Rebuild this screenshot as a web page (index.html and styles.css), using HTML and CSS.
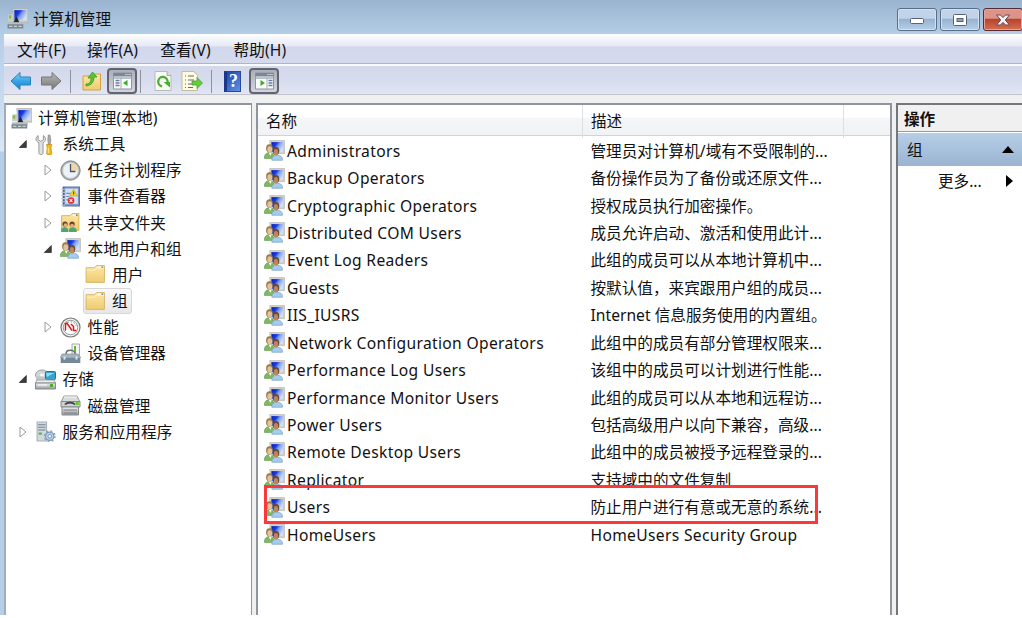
FILE: index.html
```html
<!DOCTYPE html>
<html lang="zh-CN">
<head>
<meta charset="utf-8">
<title>计算机管理</title>
<link rel="stylesheet" href="styles.css">
</head>
<body>
<svg class="sprite" width="0" height="0" aria-hidden="true">
  <defs>
    <linearGradient id="screen" x1="0" y1="0" x2="1" y2=".6"><stop offset="0" stop-color="#0a1cb4"/><stop offset=".4" stop-color="#1b3ee0"/><stop offset=".6" stop-color="#7d9cf2"/><stop offset="1" stop-color="#cfe1ff"/></linearGradient>
    <linearGradient id="gold" x1="0" y1="0" x2="0" y2="1"><stop offset="0" stop-color="#fbe7a6"/><stop offset="1" stop-color="#f0cb72"/></linearGradient>
    <linearGradient id="blueArrow" x1="0" y1="0" x2="0" y2="1"><stop offset="0" stop-color="#8cd5f8"/><stop offset=".5" stop-color="#36a5e6"/><stop offset="1" stop-color="#1a7ec9"/></linearGradient>
    <linearGradient id="greyArrow" x1="0" y1="0" x2="0" y2="1"><stop offset="0" stop-color="#b8b8b8"/><stop offset="1" stop-color="#777"/></linearGradient>
    <linearGradient id="metal" x1="0" y1="0" x2="0" y2="1"><stop offset="0" stop-color="#eef0f1"/><stop offset="1" stop-color="#979ca1"/></linearGradient>
    <symbol id="computer" viewBox="0 0 20 20">
      <path d="M5.500 .5H20v13H6.500z" fill="#d5d2ca" stroke="#aaa8a2" stroke-width=".6"/><path d="M7 2h11.500v9.500H7z" fill="url(#screen)"/>
      <path d="M1 6.500l5-.8v7H1z" fill="#c9ccc5"/><rect x="2" y="7" width="2" height="3" fill="#76c62c"/>
      <path d="M9 8l3 6H6z" fill="#20242c"/><path d="M1 13.500h15V16H1z" fill="#b7bfc5"/><path d="M.5 15.500h15v4H.5z" fill="#7b868d"/>
      <path d="M2 17.500h3m1.500 0h3m1.500 0h3" stroke="#c9d1d5" stroke-width="1.300"/>
    </symbol>
    <symbol id="users" viewBox="0 0 20 20">
      <path d="M5.500 .5h14V13h-14z" fill="#d3d0c8" stroke="#b5b2aa" stroke-width=".6"/><path d="M7 2h11v9.500H7z" fill="url(#screen)"/>
      <path d="M.3 17.500c0-4 2.500-5.500 5-5.500s4.500 2 4.500 5.500z" fill="#7fb963" stroke="#5e994a" stroke-width=".6"/>
      <path d="M4.500 12l1.500 3 1.500-3z" fill="#fff"/>
      <ellipse cx="5.200" cy="8" rx="3.200" ry="3.900" fill="#9c7a49"/><ellipse cx="5.500" cy="9" rx="2.300" ry="3" fill="#e0c399"/>
      <path d="M7.500 19.300c-.5-3.500 2-4.800 5-4.800s5.500 1.500 5 4.800z" fill="#a3cdee" stroke="#6f97c0" stroke-width=".6"/>
      <ellipse cx="11.500" cy="10.500" rx="3" ry="3.800" fill="#69492f"/><ellipse cx="11.400" cy="11.600" rx="2.100" ry="3" fill="#b98660"/>
    </symbol>
    <symbol id="tools" viewBox="0 0 20 20">
      <path d="M3 1.500v4l2.500 1.500L8 5.500V1.500c3 2 2.500 5.500-.3 6.800V18c0 2-4 2-4 0V8.300C.5 7-.2 3.500 3 1.500z" fill="#dfe0df" stroke="#888" stroke-width=".8"/>
      <path d="M12.500 1h1.800l.8 5-.6 4h-1.800l-.5-4z" fill="#aaa" stroke="#777" stroke-width=".5"/><path d="M11 10h5l-.8 3 .8 6c-1 1.300-4 1.300-5 0l.7-6z" fill="#f6b91e" stroke="#c8860b" stroke-width=".7"/>
      <path d="M12.700 13v5" stroke="#ffe78b"/>
    </symbol>
    <symbol id="clock" viewBox="0 0 21 21"><circle cx="10.500" cy="10.500" r="9.700" fill="#a7aaad" stroke="#787b7e" stroke-width=".8"/><circle cx="10.500" cy="10.500" r="7.700" fill="#edf3f8"/><path d="M10.500 10.500V2.800a7.700 7.700 0 0 1 7.700 7.700z" fill="#f4d69b"/><path d="M10.500 4v7.500h5" fill="none" stroke="#46576c" stroke-width="1.300"/><circle cx="10.500" cy="10.500" r="7.700" fill="none" stroke="#d8dadd"/></symbol>
    <symbol id="events" viewBox="0 0 20 20"><path d="M3 1h15.500v18H3z" fill="#7f9bc8" stroke="#5670a0"/><path d="M5 2.500h12V17H5z" fill="#d3e1f5"/><path d="M3.500 1v18" stroke="#4b6290" stroke-width="1.400"/><path d="M1 3h4M1 6h4M1 9h4M1 12h4M1 15h4M1 18h4" stroke="#c3cbd7"/><path d="M6 7h4m-4 3h3m-3 3h2" stroke="#6f8cba"/><path d="M13 3l3.800 6.500H9.200z" fill="#f9d629" stroke="#c6a100" stroke-width=".6"/><path d="M13 5.200v2.800" stroke="#493a00"/><circle cx="10.500" cy="13.800" r="3.200" fill="#df3037"/><path d="M9.200 12.500l2.600 2.600m0-2.600l-2.600 2.600" stroke="#fff"/></symbol>
    <symbol id="shared" viewBox="0 0 20 20"><path d="M1.500 3.500h8l2-2h6.500v16H1.500z" fill="url(#gold)" stroke="#d6a94b" stroke-width=".8"/><path d="M12 3h4" stroke="#fff"/><circle cx="16" cy="3" r=".8" fill="#2b84d2"/><path d="M1 19c0-4 2-4.500 3.500-4.500S8 15 8 19zM8.500 19c0-4 1.500-4.500 3.500-4.500s4 .5 4 4.500z" fill="#4ba774"/><circle cx="4.800" cy="11.500" r="2.500" fill="#68442a"/><circle cx="11.500" cy="11.500" r="2.500" fill="#68442a"/><circle cx="5.200" cy="12.500" r="1.700" fill="#e0b07d"/><circle cx="11.500" cy="12.800" r="1.700" fill="#e0b07d"/></symbol>
    <symbol id="folder" viewBox="0 0 20 20"><path d="M1 3.500h8l2-2h7.500V17.500H1z" fill="url(#gold)" stroke="#d5ae59" stroke-width=".8"/><path d="M1.500 6h7l2.500-2H18" fill="none" stroke="#fff0bf"/><path d="M12 3h4" stroke="#fff"/><circle cx="16.400" cy="3" r=".8" fill="#4d9bd4"/></symbol>
    <symbol id="gauge" viewBox="0 0 21 21"><circle cx="10.500" cy="10.500" r="9.500" fill="#f0f1ef" stroke="#7b7c7b" stroke-width="1.200"/><circle cx="10.500" cy="10.500" r="7.200" fill="#fff" stroke="#989a99"/><path d="M5.500 14V8.500A5.500 5.500 0 0 1 16 9" fill="none" stroke="#55a36a" stroke-width="1" stroke-dasharray="1.500 1.500"/><path d="M5.500 6v7M6.500 5.500l5.500 8M11 7l2.500 2.500v4h3" fill="none" stroke="#e01824" stroke-width="1.500"/></symbol>
    <symbol id="device" viewBox="0 0 21 21"><path d="M12 1h7.500v12H12z" fill="#f3f3f1" stroke="#aaa"/><path d="M15 3v7" stroke="#60b635" stroke-width="2"/><path d="M6 11c0-5 9-5 9 0" fill="none" stroke="#656d72" stroke-width="1.400"/><path d="M2 11h16l2.500 3.500H.5z" fill="#a8b6c0" stroke="#718390" stroke-width=".6"/><path d="M.7 13.500h19.600V20H.7z" fill="#73889a"/><path d="M1 14h19" stroke="#b8c8d2"/><path d="M4.500 13.500v3m12-3v3" stroke="#e2e6e8" stroke-width="2"/></symbol>
    <symbol id="storage" viewBox="0 0 21 21"><ellipse cx="7" cy="6" rx="6.500" ry="5" fill="#d0d5d6" stroke="#9a9fa1"/><ellipse cx="7" cy="6" rx="2" ry="1.500" fill="#f7f8f8"/><path d="M1 7v5h9V8" fill="#bfc7c4"/><rect x="10.500" y="2.500" width="10" height="8" rx="1" fill="#38a3cf" stroke="#27718f"/><path d="M11 4h8l-7 4z" fill="#92d9ef"/><path d="M2 11h17l1.500 3H.5z" fill="#edf0f0" stroke="#a1a6a8"/><path d="M.5 14h20v6H.5z" fill="url(#metal)" stroke="#888"/><path d="M3 16h9" stroke="#fff"/><rect x="15" y="15" width="3" height="3" fill="#50ac28"/></symbol>
    <symbol id="disk" viewBox="0 0 21 21"><path d="M4 1h13l3 6H1z" fill="#dadcdc" stroke="#959797"/><path d="M4 2h13" stroke="#f5f5f5"/><path d="M1 6.500h19V12H1z" fill="#cfd1d1" stroke="#888"/><path d="M5 9.500c2-2.500 8-2.500 10 0" fill="none" stroke="#3e4245" stroke-width="1.800"/><rect x="15.800" y="7" width="3" height="3" fill="#67c637"/><path d="M2 12h16.500v8H2z" fill="url(#metal)" stroke="#858788"/><path d="M3.500 15h13.500m-13.500 3h13.500" stroke="#7d7f80"/></symbol>
    <symbol id="services" viewBox="0 0 20 20"><path d="M2 1h9v18H2z" fill="#d1d9df" stroke="#a5b0b8"/><path d="M3 3.500h7M3 6h7M3 8.500h7" stroke="#73828e"/><rect x="3.500" y="11" width="3" height="2" fill="#54af42"/><circle cx="14" cy="14.500" r="4" fill="#bcd2e6" stroke="#7c9cbd" stroke-width="1.200"/><circle cx="14" cy="14.500" r="5" fill="none" stroke="#86a3c0" stroke-width="1.500" stroke-dasharray="1.800 2.130"/><circle cx="14" cy="14.500" r="1.700" fill="#fff" stroke="#7c9cbd"/></symbol>
    <symbol id="closed" viewBox="0 0 8 12"><path d="M1 1l6 5-6 5z" fill="#fff" stroke="#9a9a9a"/></symbol>
    <symbol id="opened" viewBox="0 0 10 12"><path d="M8.300 2.500v7H1.300z" fill="#3d3d3d" stroke="#222" stroke-width=".7"/></symbol>
    <symbol id="pane" viewBox="0 0 20 18"><path d="M1 1h18v16H1z" fill="#f9fafc" stroke="#8d96a3"/><path d="M1 1h18v3.500H1z" fill="#7b8796"/><path d="M13 2.500h1m1 0h1m1 0h1" stroke="#fff"/><path d="M1 6h18" stroke="#a7b1bd" stroke-width="1.500"/></symbol>
  </defs>
</svg>

<div class="window">
  <header class="titlebar">
    <svg class="app-icon"><use href="#computer"/></svg>
    <span class="title">计算机管理</span>
    <div class="controls">
      <span class="control"><svg width="16" height="10"><rect x="1.500" y="3.500" width="13" height="5" rx="1" fill="#fff" stroke="#596375"/></svg></span>
      <span class="control"><svg width="16" height="14"><rect x="1.500" y="1.500" width="13" height="11" rx="1" fill="#fff" stroke="#596375"/><rect x="5" y="5.500" width="6" height="3" fill="#84a5cc" stroke="#596375"/></svg></span>
      <span class="control close"><svg width="16" height="14" viewBox="0 0 16 14"><path d="M1.500 2h4L8 4.600 10.500 2h4l-4.200 5 4.200 5h-4L8 9.400 5.500 12h-4l4.200-5z" fill="#f3f3f4" stroke="#664750"/></svg></span>
    </div>
  </header>

  <nav class="menu">
    <span>文件(F)</span><span>操作(A)</span><span>查看(V)</span><span>帮助(H)</span>
  </nav>

  <div class="toolbar">
    <svg class="arrow" viewBox="0 0 22 20"><path d="M1 10L10 1.500V6h10.500v8H10v4.500z" fill="url(#blueArrow)" stroke="#2b80b8"/></svg>
    <svg class="arrow forward" viewBox="0 0 22 20"><path d="M21 10L12 1.500V6H1.500v8H12v4.500z" fill="url(#greyArrow)" stroke="#777"/></svg>
    <i class="divider"></i>
    <svg class="tool up" viewBox="0 0 20 20"><path d="M1 5h7l2-2h8.500v16H1z" fill="url(#gold)" stroke="#d2a243"/><path d="M4 13c4 0 5-3 5-6H6l4.500-6L15 6h-3c0 5-2 8-8 9z" fill="#5ac433" stroke="#329221" stroke-width=".7"/></svg>
    <span class="toggle"><svg viewBox="0 0 20 18"><use href="#pane"/><path d="M3 8.500h4m-4 2.500h4m-4 2.500h4" stroke="#667f9f" stroke-width="1.300"/><path d="M8.500 6v11" stroke="#aaa"/><path d="M15 8v6l-4.500-3z" fill="#38ad25"/></svg></span>
    <i class="divider second"></i>
    <svg class="tool refresh" viewBox="0 0 20 20"><path d="M2 .5h12l4 4v15H2z" fill="#f9f9f5" stroke="#b7bbb7"/><path d="M14 .5v4h4" fill="#ddd" stroke="#aaa"/><path d="M9 15.300A4.700 4.700 0 1 1 14.600 11" fill="none" stroke="#45af30" stroke-width="2.300"/><path d="M10.500 11h6.500v5.500z" fill="#45af30"/></svg>
    <svg class="tool export" viewBox="0 0 22 20"><path d="M1 .5h12l3.500 4v15H1z" fill="#fffbe2" stroke="#c2bd9d"/><path d="M4 5h1m2 0h6M4 9h1m2 0h6M4 13h1m2 0h5m-8 3.500h1m2 0h5" stroke="#656b73"/><path d="M11 10h5V6.500l5.500 5.500-5.500 5.500V14h-5z" fill="#67cc3f" stroke="#3a9c28" stroke-width=".7"/></svg>
    <i class="divider third"></i>
    <span class="help">?</span>
    <span class="toggle last"><svg viewBox="0 0 20 18"><use href="#pane"/><path d="M14 8.500h4m-4 2.500h4m-4 2.500h4" stroke="#667f9f" stroke-width="1.300"/><path d="M12.500 6v11" stroke="#aaa"/><path d="M6 8v6l4.500-3z" fill="#38ad25"/></svg></span>
  </div>

  <main class="workspace">
    <aside class="tree">
      <div class="node root"><svg class="icon"><use href="#computer"/></svg><span>计算机管理(本地)</span></div>
      <div class="node level-1"><svg class="twisty"><use href="#opened"/></svg><svg class="icon"><use href="#tools"/></svg><span>系统工具</span></div>
      <div class="node level-2"><svg class="twisty"><use href="#closed"/></svg><svg class="icon"><use href="#clock"/></svg><span>任务计划程序</span></div>
      <div class="node level-2"><svg class="twisty"><use href="#closed"/></svg><svg class="icon"><use href="#events"/></svg><span>事件查看器</span></div>
      <div class="node level-2"><svg class="twisty"><use href="#closed"/></svg><svg class="icon"><use href="#shared"/></svg><span>共享文件夹</span></div>
      <div class="node level-2"><svg class="twisty"><use href="#opened"/></svg><svg class="icon"><use href="#users"/></svg><span>本地用户和组</span></div>
      <div class="node level-3"><div class="leaf"><svg class="icon"><use href="#folder"/></svg><span>用户</span></div></div>
      <div class="node level-3"><div class="leaf selected"><svg class="icon"><use href="#folder"/></svg><span>组</span></div></div>
      <div class="node level-2"><svg class="twisty"><use href="#closed"/></svg><svg class="icon"><use href="#gauge"/></svg><span>性能</span></div>
      <div class="node level-2"><i class="twisty"></i><svg class="icon"><use href="#device"/></svg><span>设备管理器</span></div>
      <div class="node level-1"><svg class="twisty"><use href="#opened"/></svg><svg class="icon"><use href="#storage"/></svg><span>存储</span></div>
      <div class="node level-2"><i class="twisty"></i><svg class="icon"><use href="#disk"/></svg><span>磁盘管理</span></div>
      <div class="node level-1"><svg class="twisty"><use href="#closed"/></svg><svg class="icon"><use href="#services"/></svg><span>服务和应用程序</span></div>
    </aside>

    <section class="list">
      <div class="list-head"><span>名称</span><span>描述</span><span></span></div>
      <div class="row"><svg><use href="#users"/></svg><span class="name">Administrators</span><span>管理员对计算机/域有不受限制的...</span></div>
      <div class="row"><svg><use href="#users"/></svg><span class="name">Backup Operators</span><span>备份操作员为了备份或还原文件...</span></div>
      <div class="row"><svg><use href="#users"/></svg><span class="name">Cryptographic Operators</span><span>授权成员执行加密操作。</span></div>
      <div class="row"><svg><use href="#users"/></svg><span class="name">Distributed COM Users</span><span>成员允许启动、激活和使用此计...</span></div>
      <div class="row"><svg><use href="#users"/></svg><span class="name">Event Log Readers</span><span>此组的成员可以从本地计算机中...</span></div>
      <div class="row"><svg><use href="#users"/></svg><span class="name">Guests</span><span>按默认值，来宾跟用户组的成员...</span></div>
      <div class="row"><svg><use href="#users"/></svg><span class="name">IIS_IUSRS</span><span>Internet 信息服务使用的内置组。</span></div>
      <div class="row"><svg><use href="#users"/></svg><span class="name">Network Configuration Operators</span><span>此组中的成员有部分管理权限来...</span></div>
      <div class="row"><svg><use href="#users"/></svg><span class="name">Performance Log Users</span><span>该组中的成员可以计划进行性能...</span></div>
      <div class="row"><svg><use href="#users"/></svg><span class="name">Performance Monitor Users</span><span>此组的成员可以从本地和远程访...</span></div>
      <div class="row"><svg><use href="#users"/></svg><span class="name">Power Users</span><span>包括高级用户以向下兼容，高级...</span></div>
      <div class="row"><svg><use href="#users"/></svg><span class="name">Remote Desktop Users</span><span>此组中的成员被授予远程登录的...</span></div>
      <div class="row"><svg><use href="#users"/></svg><span class="name">Replicator</span><span>支持域中的文件复制</span></div>
      <div class="row"><svg><use href="#users"/></svg><span class="name">Users</span><span>防止用户进行有意或无意的系统...</span></div>
      <div class="row"><svg><use href="#users"/></svg><span class="name">HomeUsers</span><span class="name">HomeUsers Security Group</span></div>
      <div class="marker"></div>
    </section>

    <aside class="actions">
      <div class="actions-head">操作</div>
      <div class="group"><span>组</span><svg width="12" height="7"><path d="M0 7l6-7 6 7z"/></svg></div>
      <div class="more"><span>更多...</span><svg width="7" height="12"><path d="M0 0l7 6-7 6z"/></svg></div>
    </aside>
  </main>
</div>
</body>
</html>
```
FILE: styles.css
```css
* { box-sizing: border-box; }
body {
  margin: 0;
  width: 1022px;
  height: 618px;
  overflow: hidden;
  background: #fff;
  color: #111;
  font: 15.6px/24px "Noto Sans", "Noto Sans CJK SC", sans-serif;
  white-space: nowrap;
}
svg { display: block; flex: none; }
.sprite { position: absolute; }
.window {
  display: flex;
  flex-direction: column;
  height: 615px;
  padding-left: 4px;
  background: linear-gradient(#9ab4d0 0, #b4cee7 35px, #cfe0f2 120px, #d8e6f5 151px, #b6cfe9 152px);
}

.titlebar { display: flex; height: 34px; flex: none; }
.app-icon { width: 21px; height: 21px; margin: 8px 5px 0 3px; }
.title { margin-top: 7px; }
.controls { display: flex; gap: 3px; height: 23px; margin: 8px -1px 0 auto; }
.control {
  display: flex;
  align-items: center;
  justify-content: center;
  width: 40px;
  border: 1px solid #596f89;
  border-radius: 3px;
  box-shadow: inset 0 0 0 1px #d3e2f1;
  background: linear-gradient(#c0d3e8 45%, #94b0ce 46%, #b6d0e8);
}
.control.close {
  border-color: #562b35;
  box-shadow: inset 0 0 0 1px #e4a69c;
  background: linear-gradient(#dc9388 45%, #b83e2d 46%, #d2714e);
}

.menu {
  display: flex;
  height: 32px;
  flex: none;
  padding: 4px 0 0 13px;
  border-bottom: 2px solid #f9fafc;
  box-shadow: inset 0 -1px #b3b5bd;
  background: linear-gradient(#fff, #e5e9f5 12px, #d2d8eb 13px, #d5daed);
}
.menu span { width: 73.3px; letter-spacing: .1px; }
.menu span:first-child { width: 70px; }

.toolbar {
  display: flex;
  align-items: center;
  height: 29px;
  flex: none;
  padding: 2px 0 0 6px;
  border-bottom: 1px solid #bfc2ca;
  background: linear-gradient(#d3d8eb, #d6dbed 45%, #e1e5f4);
}
.arrow { width: 22px; height: 20px; }
.forward { margin-left: 8px; }
.divider { width: 1px; height: 23px; margin-left: 8px; background: #8e929c; }
.tool { width: 20px; height: 20px; }
.up { margin-left: 11px; }
.toggle {
  display: flex;
  align-items: center;
  justify-content: center;
  width: 30px;
  height: 26px;
  margin-left: 5px;
  border: 2px solid #62656e;
  border-radius: 4px;
  background: linear-gradient(#abafba, #d2d5e0);
}
.toggle svg { width: 21px; height: 18px; }
.second { margin-left: 3px; }
.refresh { margin-left: 12px; }
.export { width: 22px; margin-left: 8px; }
.third { margin-left: 8px; }
.help {
  width: 17px;
  height: 21px;
  margin-left: 12px;
  border: 1px solid #234a9c;
  border-left: 3px solid #1b398c;
  background: linear-gradient(135deg, #2245ae, #6191e3);
  color: #fff;
  font: bold 18px/19px "Liberation Serif", serif;
  text-align: center;
}
.toggle.last { margin-left: 8px; }

.workspace {
  display: flex;
  flex: 1;
  min-height: 0;
  padding-top: 8px;
  background: #f0f0f0;
}
.tree {
  width: 248px;
  margin-right: 4px;
  border: solid #8f959e;
  border-width: 2px 1px 0 2px;
  border-left-color: #a5adbb;
  background: #fff;
}
.node { display: flex; align-items: center; height: 26.15px; }
.node span { letter-spacing: .12px; }
.icon { width: 21px; height: 21px; }
.icon + span { margin-left: 6px; }
.root { padding-left: 5px; }
.level-1 { padding-left: 12px; }
.level-2 { padding-left: 37px; }
.level-3 { padding-left: 77px; }
.twisty { width: 10px; height: 12px; margin-right: 7px; }
.level-1 .icon + span, .level-2 .icon + span { margin-left: 6.5px; }
.leaf { display: flex; align-items: center; height: 26px; padding: 0 3px 0 1px; border: 1px solid transparent; }
.leaf .icon + span { margin-left: 6px; }
.leaf.selected { border-color: #d8d8d8; border-radius: 3px; background: linear-gradient(#f9f9f9, #e7e7e7); }

.list {
  position: relative;
  width: 636px;
  margin-right: 4px;
  border: solid #8f959e;
  border-width: 2px 2px 0;
  background: #fff;
}
.list-head {
  display: grid;
  grid-template-columns: 325px 261px 1fr;
  height: 31px;
  margin-bottom: 1px;
  border-bottom: 1px solid #d2d3d5;
  background: linear-gradient(#fff 40%, #f5f6f8 45%, #f0f2f4);
  line-height: 33px;
}
.list-head span { padding-left: 8px; border-right: 1px solid #dedfe2; }
.list-head span:last-child { border: 0; }
.row {
  display: grid;
  grid-template-columns: 23px 303.5px 1fr;
  align-items: center;
  height: 27.43px;
  padding-left: 6px;
  letter-spacing: .03px;
}
.row .name { letter-spacing: .34px; }
.row svg { width: 21px; height: 21px; }
.marker { position: absolute; left: 6px; top: 380px; width: 554px; height: 39px; border: 3px solid #fb3939; }

.actions {
  flex: 1;
  border: solid #73767b;
  border-width: 2px 0 0 2px;
  background: #fff;
}
.actions-head { height: 27px; padding-left: 6px; border-bottom: 1px solid #999; background: #f0f0f0; font-weight: bold; line-height: 29px; }
.group {
  display: flex;
  align-items: center;
  justify-content: space-between;
  height: 33px;
  margin-top: 1px;
  padding: 0 8px 0 9px;
  background: linear-gradient(#b6cee7, #9ab4d1);
}
.more { display: flex; align-items: center; justify-content: space-between; height: 30px; padding: 0 9px 0 40px; }
```
